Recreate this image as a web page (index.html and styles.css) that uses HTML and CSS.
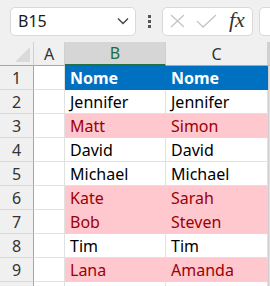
FILE: index.html
```html
<!DOCTYPE html>
<html lang="pt-br">
<head>
    <meta charset="UTF-8">
    <meta name="viewport" content="width=device-width, initial-scale=1.0">
    <title>Planilha</title>
    <link rel="stylesheet" href="styles.css">
</head>
<body>
    <div class="barra">
        <div class="caixa-nome">
            <span>B15</span>
            <svg class="seta" width="12" height="8" viewBox="0 0 12 8"><path d="M1 1.5 L6 6.5 L11 1.5" fill="none" stroke="#444" stroke-width="1.4"/></svg>
        </div>
        <div class="pontos"><i></i><i></i><i></i></div>
        <div class="caixa-formula">
            <svg width="15" height="14" viewBox="0 0 15 14"><path d="M1 1 L14 13 M14 1 L1 13" stroke="#c4c4c4" stroke-width="1.3" fill="none"/></svg>
            <svg width="21" height="14" viewBox="0 0 21 14"><path d="M1 7 L7 13 L20 1" stroke="#c4c4c4" stroke-width="1.3" fill="none"/></svg>
            <span class="fx">fx</span>
        </div>
        <div class="caixa-extra"></div>
    </div>

    <div class="grade">
        <div class="canto"><div class="triangulo"></div></div>
        <div class="col">A</div>
        <div class="col sel">B</div>
        <div class="col">C</div>
        <div class="col fim"></div>

        <div class="lin">1</div><div class="cel"></div><div class="cel cab">Nome</div><div class="cel cab">Nome</div><div class="cel fim"></div>
        <div class="lin">2</div><div class="cel"></div><div class="cel">Jennifer</div><div class="cel">Jennifer</div><div class="cel fim"></div>
        <div class="lin">3</div><div class="cel"></div><div class="cel dif">Matt</div><div class="cel dif">Simon</div><div class="cel fim"></div>
        <div class="lin">4</div><div class="cel"></div><div class="cel">David</div><div class="cel">David</div><div class="cel fim"></div>
        <div class="lin">5</div><div class="cel"></div><div class="cel">Michael</div><div class="cel">Michael</div><div class="cel fim"></div>
        <div class="lin">6</div><div class="cel"></div><div class="cel dif">Kate</div><div class="cel dif">Sarah</div><div class="cel fim"></div>
        <div class="lin">7</div><div class="cel"></div><div class="cel dif">Bob</div><div class="cel dif">Steven</div><div class="cel fim"></div>
        <div class="lin">8</div><div class="cel"></div><div class="cel">Tim</div><div class="cel">Tim</div><div class="cel fim"></div>
        <div class="lin">9</div><div class="cel"></div><div class="cel dif">Lana</div><div class="cel dif">Amanda</div><div class="cel fim"></div>
        <div class="lin"></div><div class="cel"></div><div class="cel"></div><div class="cel"></div><div class="cel fim"></div>
    </div>
</body>
</html>
```

FILE: styles.css
```css
body {
    margin: 0;
    width: 270px;
    height: 286px;
    overflow: hidden;
    background-color: #f0f0f0;
    font-family: "Noto Sans", sans-serif;
    color: #000;
}
.barra {
    display: flex;
    align-items: center;
    height: 42px;
    padding-left: 10px;
    box-sizing: border-box;
}
.barra > * {
    flex-shrink: 0;
}
.caixa-nome {
    display: flex;
    align-items: center;
    justify-content: space-between;
    width: 126px;
    height: 29px;
    box-sizing: border-box;
    padding: 0 6px 0 7px;
    background-color: #fff;
    border: 1px solid #d9d9d9;
    border-radius: 5px;
    font-size: 16px;
    color: #1b1b1b;
}
.pontos {
    display: flex;
    flex-direction: column;
    gap: 2px;
    margin: 0 11px 0 12px;
}
.pontos i {
    width: 3px;
    height: 3px;
    background-color: #555;
}
.caixa-formula {
    display: flex;
    align-items: center;
    gap: 11px;
    width: 91px;
    height: 29px;
    box-sizing: border-box;
    padding-left: 7px;
    background-color: #fff;
    border: 1px solid #d9d9d9;
    border-radius: 5px;
}
.fx {
    font-family: "Liberation Serif", serif;
    font-style: italic;
    font-size: 22px;
    color: #333;
    margin-left: 1px;
    margin-top: -3px;
}
.caixa-extra {
    width: 40px;
    height: 29px;
    margin-left: 6px;
    box-sizing: border-box;
    background-color: #fff;
    border: 1px solid #d9d9d9;
    border-radius: 5px;
}
.grade {
    display: grid;
    grid-template-columns: 34px 31px 101px 102px 2px;
    grid-template-rows: repeat(11, 24px);
    background-color: #fff;
}
.grade > div {
    box-sizing: border-box;
    display: flex;
    align-items: center;
}
.canto {
    background-color: #f0f0f0;
    border-right: 1px solid #d0d0d0;
    border-bottom: 1px solid #a6a6a6;
    position: relative;
}
.triangulo {
    position: absolute;
    right: 3px;
    bottom: 3px;
    width: 0;
    height: 0;
    border-left: 15px solid transparent;
    border-bottom: 15px solid #dadada;
}
.col {
    justify-content: center;
    background-color: #f0f0f0;
    border-right: 1px solid #d0d0d0;
    border-bottom: 1px solid #a6a6a6;
    font-size: 16px;
    color: #333;
}
.col.sel {
    background-color: #d6d6d6;
    border-bottom: 2px solid #217346;
    color: #1f6b40;
}
.lin {
    justify-content: center;
    background-color: #f0f0f0;
    border-right: 1px solid #a6a6a6;
    border-bottom: 1px solid #d8d8d8;
    font-size: 16px;
    color: #333;
}
.cel {
    padding-left: 5px;
    border-right: 1px solid #e1e1e1;
    border-bottom: 1px solid #e1e1e1;
    font-size: 16px;
    white-space: nowrap;
}
.cel.cab {
    background-color: #0070c0;
    border-color: #0070c0;
    color: #fff;
    font-weight: bold;
}
.cel.dif {
    background-color: #ffc7ce;
    border-color: #ffc7ce;
    color: #9c0006;
}
.fim {
    padding: 0;
    border-left: 1px solid #d0d0d0;
}
```
